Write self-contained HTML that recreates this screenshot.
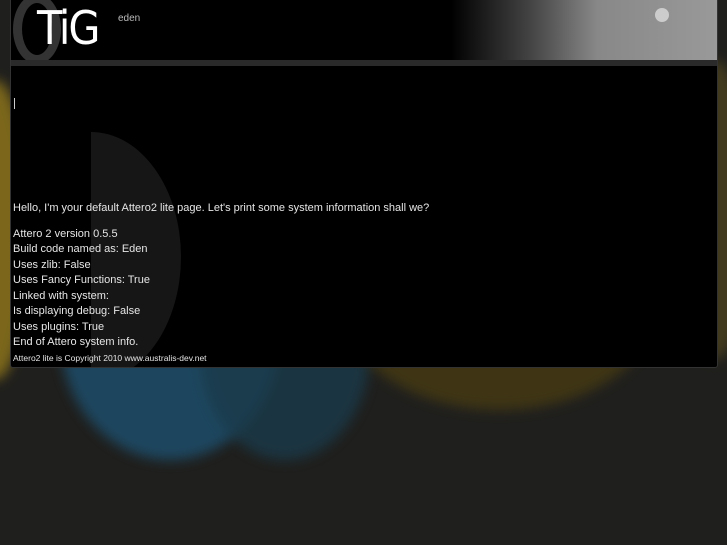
<!DOCTYPE html>
<html><head><style>
body{margin:0;width:727px;height:545px;overflow:hidden;background:#1f1f1d;font-family:"Liberation Sans",sans-serif;position:relative}
.bg{position:absolute;border-radius:50%;filter:blur(6px)}
#box{position:absolute;left:10px;top:0;width:706px;height:367px;background:#000;border:1px solid #333;border-top:none;border-radius:0 0 3px 3px;overflow:hidden}
#hdr{position:absolute;left:0;top:0;width:706px;height:60px;background:#000}
#bar{position:absolute;left:0;top:60px;width:706px;height:6px;background:#2a2a2a}
.t{position:absolute;left:2px;color:#e6e6e6;font-size:11px;white-space:nowrap}
</style></head><body>
<div class="bg" style="left:-40px;top:80px;width:70px;height:300px;background:#b8961a;opacity:.6"></div>
<div class="bg" style="left:60px;top:210px;width:220px;height:250px;background:#1d4d6a;opacity:.85"></div>
<div class="bg" style="left:200px;top:240px;width:170px;height:220px;background:#1a3a4a;opacity:.8"></div>
<div class="bg" style="left:340px;top:190px;width:320px;height:220px;background:#4a3d12;opacity:.75"></div>
<div class="bg" style="left:680px;top:60px;width:70px;height:300px;background:#5a4d20;opacity:.6"></div>
<div id="box">
 <div id="hdr">
  <div style="position:absolute;left:440px;top:0;width:266px;height:60px;background:linear-gradient(90deg,#000 0%,#444 30%,#888 55%,#999 100%)"></div>
  <div style="position:absolute;left:644px;top:8px;width:14px;height:14px;border-radius:50%;background:#ccc"></div>
  <div style="position:absolute;left:2px;top:-6px;width:48px;height:70px;border-radius:50%;border:9px solid #333;box-sizing:border-box"></div>
  <div style="position:absolute;left:26px;top:5px;line-height:46px;color:#fff;font-size:46px;font-family:'DejaVu Sans Condensed','DejaVu Sans',sans-serif;letter-spacing:-2px">TiG</div>
  <div style="position:absolute;left:107px;top:13px;color:#bbb;font-size:10px">eden</div>
 </div>
 <div id="bar"></div>
 <div style="position:absolute;left:-10px;top:132px;width:180px;height:250px;border-radius:50%;background:#161616;clip-path:inset(0 0 0 50%);"></div>
 <div style="position:absolute;left:3px;top:98px;width:1px;height:11px;background:#ccc"></div>
 <div class="t" style="top:202px">Hello, I'm your default Attero2 lite page. Let's print some system information shall we?</div>
 <div class="t" style="top:228px">Attero 2 version 0.5.5</div>
 <div class="t" style="top:243px">Build code named as: Eden</div>
 <div class="t" style="top:259px">Uses zlib: False</div>
 <div class="t" style="top:274px">Uses Fancy Functions: True</div>
 <div class="t" style="top:290px">Linked with system:</div>
 <div class="t" style="top:305px">Is displaying debug: False</div>
 <div class="t" style="top:321px">Uses plugins: True</div>
 <div class="t" style="top:336px">End of Attero system info.</div>
 <div class="t" style="top:353px;font-size:8.5px">Attero2 lite is Copyright 2010 www.australis-dev.net</div>
</div>
</body></html>
